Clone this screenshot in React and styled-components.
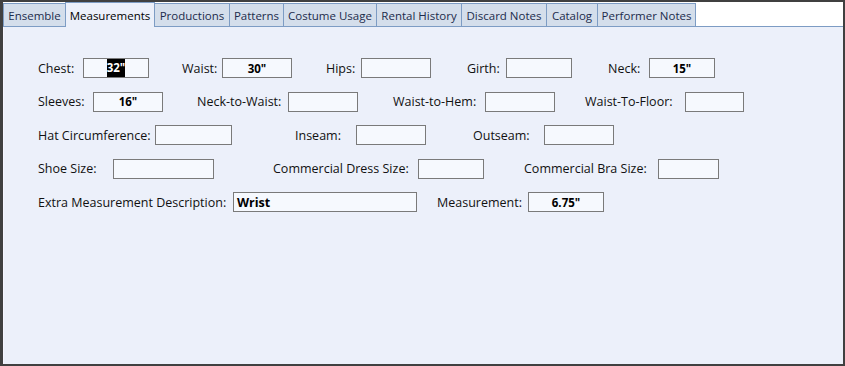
import React from 'react';
import styled, { createGlobalStyle } from 'styled-components';

const GlobalStyle = createGlobalStyle`
  html, body {
    margin: 0;
    padding: 0;
    background: #404040;
  }
  body {
    font-family: "Open Sans", "Noto Sans", sans-serif;
    font-size: 12.5px;
    color: #000;
  }
`;

const tabs = [
  { name: 'Ensemble', width: 62 },
  { name: 'Measurements', width: 89, active: true },
  { name: 'Productions', width: 75 },
  { name: 'Patterns', width: 54 },
  { name: 'Costume Usage', width: 93 },
  { name: 'Rental History', width: 85 },
  { name: 'Discard Notes', width: 85 },
  { name: 'Catalog', width: 51 },
  { name: 'Performer Notes', width: 98 },
];

// each field: gap before label, label width, box width, value
const rows = [
  [
    { label: 'Chest:', gap: 0, lw: 45, bw: 66, value: '32"', selected: true },
    { label: 'Waist:', gap: 33, lw: 40, bw: 70, value: '30"' },
    { label: 'Hips:', gap: 34, lw: 35, bw: 70 },
    { label: 'Girth:', gap: 36, lw: 39, bw: 66 },
    { label: 'Neck:', gap: 36, lw: 41, bw: 66, value: '15"' },
  ],
  [
    { label: 'Sleeves:', gap: 0, lw: 55, bw: 70, value: '16"' },
    { label: 'Neck-to-Waist:', gap: 34, lw: 91, bw: 70 },
    { label: 'Waist-to-Hem:', gap: 35, lw: 92, bw: 70 },
    { label: 'Waist-To-Floor:', gap: 30, lw: 100, bw: 59 },
  ],
  [
    { label: 'Hat Circumference:', gap: 0, lw: 117, bw: 77 },
    { label: 'Inseam:', gap: 63, lw: 61, bw: 70 },
    { label: 'Outseam:', gap: 47, lw: 71, bw: 70 },
  ],
  [
    { label: 'Shoe Size:', gap: 0, lw: 75, bw: 101 },
    { label: 'Commercial Dress Size:', gap: 59, lw: 145, bw: 66 },
    { label: 'Commercial Bra Size:', gap: 40, lw: 134, bw: 61 },
  ],
  [
    { label: 'Extra Measurement Description:', gap: 0, lw: 195, bw: 184, value: 'Wrist', left: true },
    { label: 'Measurement:', gap: 20, lw: 91, bw: 76, value: '6.75"' },
  ],
];

const Window = styled.div`
  width: 845px;
  height: 366px;
  box-sizing: border-box;
  border-style: solid;
  border-color: #404040;
  border-width: 2px 2px 2px 3px;
  display: flex;
  flex-direction: column;
  background: #ecf0fa;
`;

const TabStrip = styled.div`
  display: flex;
  align-items: flex-start;
  height: 25px;
  box-sizing: border-box;
  background: #ffffff;
  border-bottom: 1px solid #7d9cc4;
  font-size: 11.5px;
`;

const Tab = styled.div`
  box-sizing: border-box;
  width: ${(p) => p.$w + 1}px;
  margin-left: ${(p) => (p.$first ? 0 : -1)}px;
  margin-top: ${(p) => (p.$active ? 0 : 1)}px;
  height: ${(p) => (p.$active ? 25 : 23)}px;
  border: 1px solid #7d9cc4;
  border-bottom: none;
  background: ${(p) => (p.$active ? '#ecf0fa' : '#d4deeb')};
  color: ${(p) => (p.$active ? '#000' : '#1c2c4c')};
  display: flex;
  align-items: center;
  justify-content: center;
  padding-top: ${(p) => (p.$active ? 1 : 0)}px;
  position: relative;
  z-index: ${(p) => (p.$active ? 2 : 1)};
  white-space: nowrap;
`;

const Panel = styled.div`
  flex: 1;
  border-left: 1px solid #f6f6ff;
  padding: 31px 0 0 34px;
  display: flex;
  flex-direction: column;
  gap: 13.5px;
`;

const Row = styled.div`
  display: flex;
  align-items: center;
  height: 20px;
`;

const Field = styled.div`
  display: flex;
  align-items: center;
  margin-left: ${(p) => p.$gap}px;
`;

const Label = styled.span`
  width: ${(p) => p.$w}px;
  white-space: nowrap;
  color: #111;
`;

const Box = styled.div`
  box-sizing: border-box;
  width: ${(p) => p.$w}px;
  height: 20px;
  border: 1px solid #7a7a7a;
  background: #f6f9fe;
  display: flex;
  align-items: center;
  justify-content: ${(p) => (p.$left ? 'flex-start' : 'center')};
  padding-left: ${(p) => (p.$left ? 3 : 0)}px;
  font-weight: 700;
  font-size: ${(p) => (p.$left ? 12.5 : 11.5)}px;
  color: #000;
`;

const Selected = styled.span`
  background: #000;
  color: #fff;
  padding: 1px 0;
  line-height: 16px;
`;

export default function App() {
  return (
    <>
      <GlobalStyle />
      <Window>
        <TabStrip>
          {tabs.map((t, i) => (
            <Tab key={t.name} $w={t.width} $first={i === 0} $active={t.active}>
              {t.name}
            </Tab>
          ))}
        </TabStrip>
        <Panel>
          {rows.map((row, ri) => (
            <Row key={ri}>
              {row.map((f) => (
                <Field key={f.label} $gap={f.gap}>
                  <Label $w={f.lw}>{f.label}</Label>
                  <Box $w={f.bw} $left={f.left}>
                    {f.selected ? <Selected>{f.value}</Selected> : f.value}
                  </Box>
                </Field>
              ))}
            </Row>
          ))}
        </Panel>
      </Window>
    </>
  );
}
